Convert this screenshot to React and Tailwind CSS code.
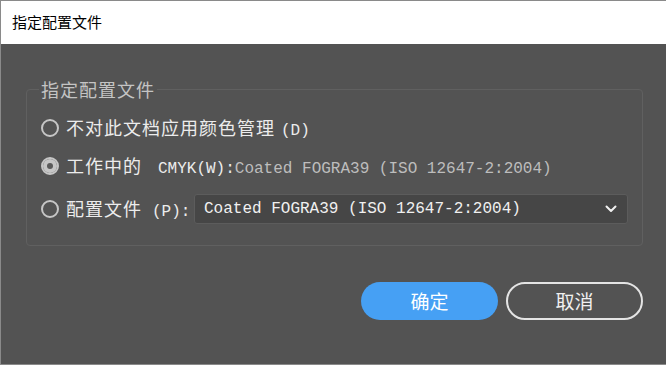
import React, { useState } from 'react';

const cjk = { fontFamily: '"Noto Sans CJK SC", sans-serif' };
const mono = { fontFamily: '"Liberation Mono", "Noto Sans CJK SC", monospace' };

const Radio = ({ checked }) => (
  <span className="w-[18px] h-[18px] rounded-full border-2 border-[#c6c6c6] flex items-center justify-center shrink-0 bg-transparent">
    {checked && <span className="w-full h-full rounded-full bg-[#c6c6c6] flex items-center justify-center"><span className="w-[6px] h-[6px] rounded-full bg-[#5a5a5a]" /></span>}
  </span>
);

const App = () => {
  const [mode, setMode] = useState('cmyk');
  const profile = 'Coated FOGRA39 (ISO 12647-2:2004)';

  return (
    <div className="w-[666px] h-[365px] flex flex-col border-l border-t border-b border-[#8a8a8a] overflow-hidden" style={cjk}>
      <div className="h-[43px] bg-white flex items-center pl-[11px] text-[15px] text-black">指定配置文件</div>
      <div className="flex-1 bg-[#535353] flex flex-col pl-[25px] pr-[23px]">
        <fieldset className="mt-[35px] h-[167px] border border-[#606060] rounded-[4px] flex flex-col">
          <legend className="ml-[12px] px-[2px] text-[18px] leading-[20px] text-[#c4c4c4] tracking-[1px]">指定配置文件</legend>
          {/* no colour management */}
          <label className="mt-[16px] h-[26px] flex items-center pl-[14px] gap-[7px] text-[#ececec] whitespace-nowrap" onClick={() => setMode('none')}>
            <Radio checked={mode === 'none'} />
            <span>
              <span className="text-[18px] tracking-[1px]">不对此文档应用颜色管理</span>
              <span className="text-[16px] ml-[6px]" style={mono}>(D)</span>
            </span>
          </label>
          {/* working cmyk */}
          <label className="mt-[12px] h-[26px] flex items-center pl-[14px] gap-[7px] text-[#ececec] whitespace-nowrap" onClick={() => setMode('cmyk')}>
            <Radio checked={mode === 'cmyk'} />
            <span>
              <span className="text-[18px] tracking-[1px]">工作中的</span>
              <span className="text-[16px] ml-[16px]" style={mono}>CMYK(W):</span>
              <span className="text-[16px] text-[#bdbdbd]" style={mono}>{profile}</span>
            </span>
          </label>
          {/* profile picker */}
          <div className="mt-[15px] h-[30px] flex items-center pl-[14px] text-[#ececec] whitespace-nowrap">
            <span className="mr-[7px]" onClick={() => setMode('file')}><Radio checked={mode === 'file'} /></span>
            <span className="shrink-0">
              <span className="text-[18px] tracking-[1px]">配置文件</span>
              <span className="text-[16px] ml-[10px]" style={mono}>(P):</span>
            </span>
            <div className="ml-auto mr-[14px] w-[434px] shrink-0 h-[30px] bg-[#464646] border border-[#5c5c5c] rounded-[3px] flex items-center justify-between pl-[9px] pr-[10px]">
              <span className="text-[16px] text-[#f0f0f0]" style={mono}>{profile}</span>
              <svg width="12" height="8" viewBox="0 0 12 8" fill="none">
                <path d="M1.5 1.5 L6 6 L10.5 1.5" stroke="#f0f0f0" strokeWidth="2" strokeLinecap="round" strokeLinejoin="round" />
              </svg>
            </div>
          </div>
        </fieldset>
        <div className="mt-[36px] flex justify-end gap-[8px]">
          <button className="w-[137px] h-[38px] rounded-full bg-[#46a0f4] text-white text-[19px]">确定</button>
          <button className="w-[137px] h-[38px] rounded-full border-2 border-[#e4e4e4] text-[#f0f0f0] text-[19px]">取消</button>
        </div>
      </div>
    </div>
  );
};

export default App;
